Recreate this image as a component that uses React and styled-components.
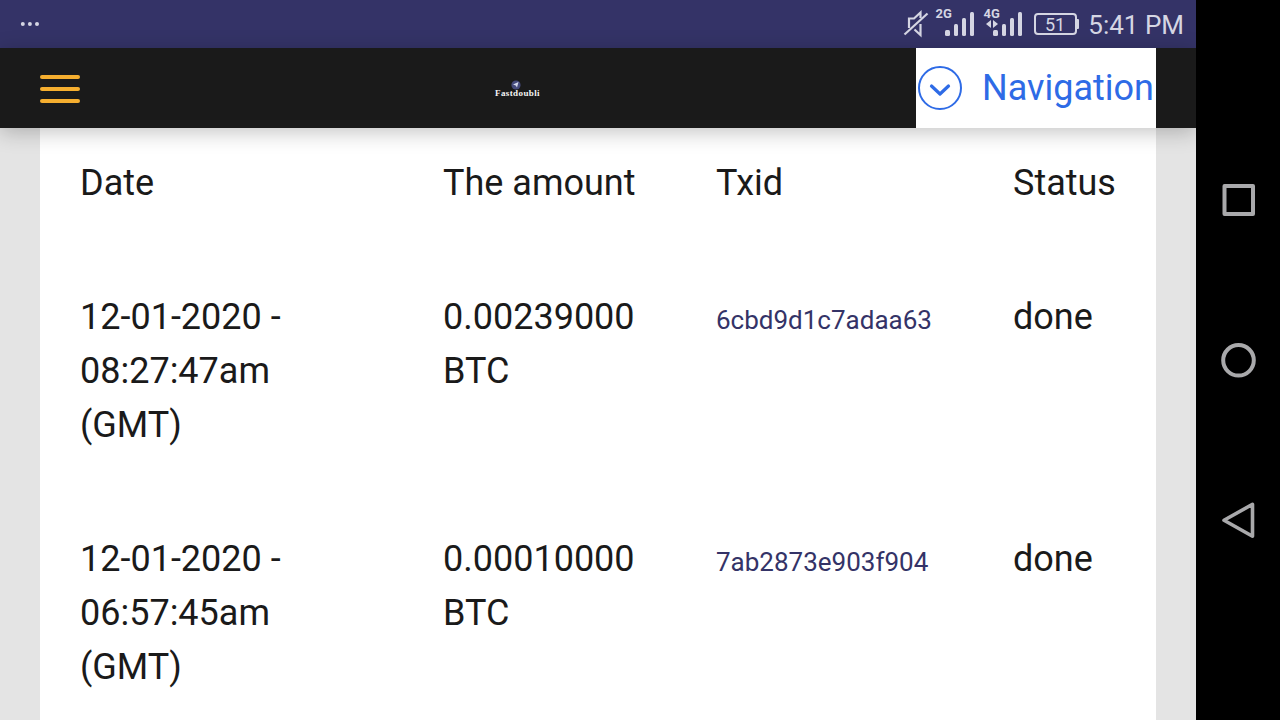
import styled, { createGlobalStyle } from 'styled-components';

const GlobalStyle = createGlobalStyle`
  * {
    box-sizing: border-box;
  }
  body {
    margin: 0;
    overflow: hidden;
    font-family: Roboto, "Liberation Sans", sans-serif;
  }
`;

const Device = styled.div`
  display: flex;
  width: 1280px;
  height: 720px;
  background: #000;
  overflow: hidden;
`;

const Screen = styled.div`
  display: flex;
  flex-direction: column;
  width: 1196px;
  height: 100%;
  background: #e4e4e4;
  overflow: hidden;
`;

const StatusBar = styled.div`
  display: flex;
  align-items: center;
  justify-content: space-between;
  flex: none;
  height: 48px;
  padding: 0 12px 0 20px;
  background: #343367;
`;

const StatusIcons = styled.svg`
  display: block;
  margin-right: 8px;
`;

const StatusGroup = styled.div`
  display: flex;
  align-items: center;
`;

const Clock = styled.span`
  font-size: 26px;
  line-height: 30px;
  padding-top: 2px;
  color: #d5d6e3;
`;

const Header = styled.header`
  display: flex;
  align-items: center;
  justify-content: space-between;
  flex: none;
  height: 80px;
  padding: 0 40px;
  background: #1a1a1a;
  box-shadow: 0 4px 20px rgba(0, 0, 0, 0.24);
  z-index: 1;
`;

const MenuButton = styled.div`
  display: flex;
  flex-direction: column;
  gap: 8px;
  width: 40px;
  padding-top: 2px;
`;

const MenuLine = styled.span`
  height: 4px;
  border-radius: 2px;
  background: #f5ae2f;
`;

const Logo = styled.div`
  display: flex;
  flex-direction: column;
  align-items: center;
  width: 46px;
  margin-left: 39px;
`;

const LogoMark = styled.svg`
  display: block;
  margin-left: -4px;
`;

const LogoName = styled.span`
  font-family: "Liberation Serif", "Times New Roman", serif;
  font-size: 9px;
  font-weight: bold;
  line-height: 8px;
  letter-spacing: 0.4px;
  margin-top: -1px;
  color: #f4f4f4;
`;

const NavToggle = styled.div`
  display: flex;
  align-items: center;
  gap: 20px;
  width: 240px;
  height: 80px;
  padding-left: 2px;
  background: #fff;
  color: #2e6be6;
  font-size: 36px;
  line-height: 54px;
  white-space: nowrap;
`;

const Content = styled.main`
  flex: 1;
  min-height: 0;
  margin: 0 40px;
  background: #fff;
  overflow: hidden;
`;

const Table = styled.div`
  margin-top: -12px;
`;

const Row = styled.div`
  display: grid;
  grid-template-columns: 363px 273px 297px 183px;
  font-size: 36px;
  line-height: 54px;
  color: #1a1a1a;
`;

const Cell = styled.div`
  padding: 40px 0 40px 40px;
  white-space: pre-line;
`;

const Txid = styled.span`
  font-size: 26px;
  color: #343367;
`;

const SystemNav = styled.nav`
  display: flex;
  flex-direction: column;
  align-items: center;
  justify-content: center;
  gap: 120px;
  width: 84px;
  height: 100%;
  background: #000;
`;

const withdrawals = [
  {
    date: '12-01-2020 -\n08:27:47am\n(GMT)',
    amount: '0.00239000\nBTC',
    txid: '6cbd9d1c7adaa63',
    status: 'done',
  },
  {
    date: '12-01-2020 -\n06:57:45am\n(GMT)',
    amount: '0.00010000\nBTC',
    txid: '7ab2873e903f904',
    status: 'done',
  },
];

const MoreDots = () => (
  <svg width="20" height="6" fill="#d5d6e3">
    <circle cx="2.8" cy="3" r="2" />
    <circle cx="9.9" cy="3" r="2" />
    <circle cx="17" cy="3" r="2" />
  </svg>
);

// mute, two SIM signals and the battery
const Indicators = () => (
  <StatusIcons width="180" height="48" viewBox="900 0 180 48" fill="#d5d6e3">
    <g fill="none" stroke="#d5d6e3" strokeWidth="2.2">
      <path d="M904.5 34.5L927.5 13.5" />
      <path d="M909 28V18.5H914L920.5 12.5V18" />
      <path d="M914.5 29.5L920.5 35V24" />
    </g>
    <text x="935.5" y="18" fontSize="13" fontWeight="bold">2G</text>
    <rect x="945" y="30" width="5" height="6" rx="1.5" />
    <rect x="954" y="24" width="4" height="12" rx="1.5" />
    <rect x="962" y="18" width="4" height="18" rx="1.5" />
    <rect x="970" y="12" width="4" height="24" rx="1.5" />
    <text x="983.5" y="18" fontSize="13" fontWeight="bold">4G</text>
    <path d="M986 24L991 20V28ZM998 24L993 20V28Z" />
    <rect x="993" y="30" width="5" height="6" rx="1.5" />
    <rect x="1002" y="24" width="4" height="12" rx="1.5" />
    <rect x="1010" y="18" width="4" height="18" rx="1.5" />
    <rect x="1018" y="12" width="4" height="24" rx="1.5" />
    <rect x="1035" y="14" width="41" height="20" rx="3" fill="none" stroke="#d5d6e3" strokeWidth="2" />
    <rect x="1076" y="19" width="3" height="10" rx="1" />
    <text x="1055" y="31" fontSize="18" textAnchor="middle">51</text>
  </StatusIcons>
);

const ChevronCircle = () => (
  <svg width="44" height="44" viewBox="0 0 44 44" fill="none" stroke="currentColor">
    <circle cx="22" cy="22" r="21" strokeWidth="2" />
    <path d="M13.5 20L22 28L30.5 20" strokeWidth="3.2" strokeLinecap="round" strokeLinejoin="round" />
  </svg>
);

const SystemIcon = ({ children }) => (
  <svg width="40" height="40" viewBox="0 0 40 40" fill="none" stroke="#a9a9ab" strokeWidth="4" strokeLinejoin="round">
    {children}
  </svg>
);

const App = () => (
  <>
    <GlobalStyle />
    <Device>
      <Screen>
        <StatusBar>
          <MoreDots />
          <StatusGroup>
            <Indicators />
            <Clock>5:41 PM</Clock>
          </StatusGroup>
        </StatusBar>
        <Header>
          <MenuButton>
            <MenuLine />
            <MenuLine />
            <MenuLine />
          </MenuButton>
          <Logo>
            <LogoMark width="10" height="10" viewBox="0 0 10 10">
              <circle cx="5" cy="5" r="4.6" fill="#454a7c" />
              <path d="M2 4.5L7.5 2L6 7.5L4.7 5.5Z" fill="#d4d8ed" />
            </LogoMark>
            <LogoName>Fastdoubli</LogoName>
          </Logo>
          <NavToggle>
            <ChevronCircle />
            Navigation
          </NavToggle>
        </Header>
        <Content>
          <Table>
            <Row>
              <Cell>Date</Cell>
              <Cell>The amount</Cell>
              <Cell>Txid</Cell>
              <Cell>Status</Cell>
            </Row>
            {withdrawals.map((item) => (
              <Row key={item.txid}>
                <Cell>{item.date}</Cell>
                <Cell>{item.amount}</Cell>
                <Cell><Txid>{item.txid}</Txid></Cell>
                <Cell>{item.status}</Cell>
              </Row>
            ))}
          </Table>
        </Content>
      </Screen>
      <SystemNav>
        <SystemIcon>
          <rect x="6.5" y="6" width="28.5" height="28" />
        </SystemIcon>
        <SystemIcon>
          <circle cx="20.5" cy="20.3" r="15.3" />
        </SystemIcon>
        <SystemIcon>
          <path d="M6 20.3L34.5 4.3V36.3Z" strokeWidth="3.6" />
        </SystemIcon>
      </SystemNav>
    </Device>
  </>
);

export default App;
